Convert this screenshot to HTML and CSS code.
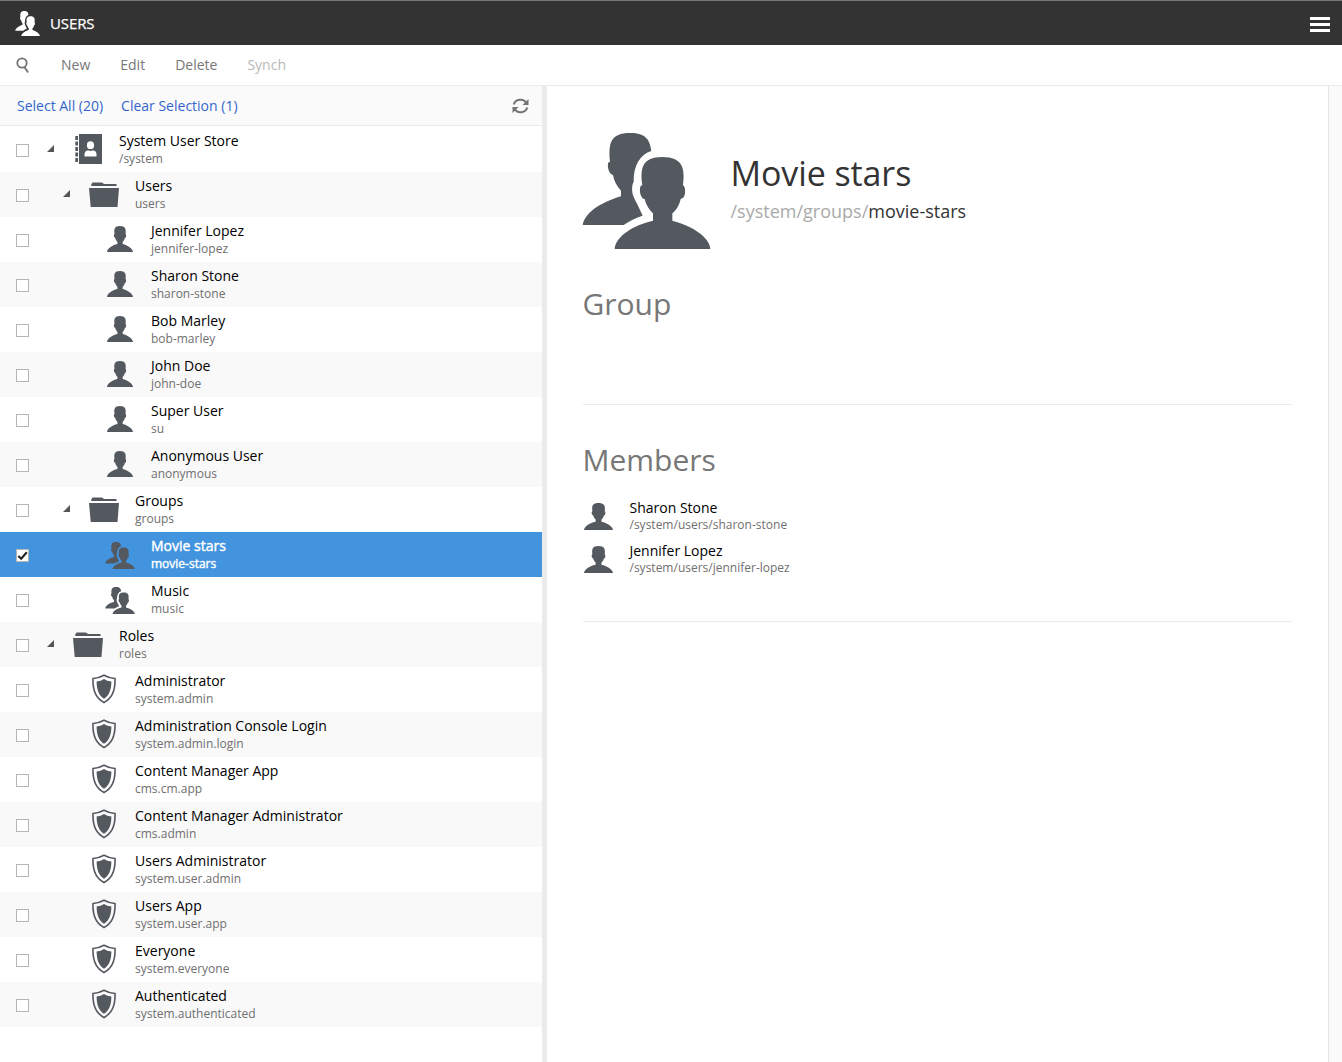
FILE: index.html
```html
<!DOCTYPE html>
<html lang="en">
<head>
<meta charset="utf-8">
<title>Users</title>
<link rel="stylesheet" href="styles.css">
</head>
<body>
<svg class="sprite" aria-hidden="true">
  <symbol id="user" viewBox="134 111 287 276" preserveAspectRatio="none">
    <path d="M134 387C136 350 190 315 249 302V280C240 272 228 255 224 237C213 236 207 215 211 200Q213 196 217 196C210 145 216 111 277 111C338 111 346 145 339 196C346 197 347 220 343 228Q339 237 332 237C328 255 318 272 307 280V302C360 315 420 350 421 387Z"/>
  </symbol>
  <symbol id="group" viewBox="36 39 387 348" preserveAspectRatio="none">
    <path d="M134 387C136 350 190 315 249 302V280C240 272 228 255 224 237C213 236 207 215 211 200Q213 196 217 196C210 145 216 111 277 111C338 111 346 145 339 196C346 197 347 220 343 228Q339 237 332 237C328 255 318 272 307 280V302C360 315 420 350 421 387Z"/>
    <path d="M38 315C45 280 85 250 153 229V212C140 198 132 183 129 165C118 163 112 145 114 130Q116 125 120 125C115 70 120 39 181 39C228 39 240 60 244 93C212 102 190 135 191 185C185 195 185 215 190 228Q194 239 202 253L218 287C197 293 178 303 161 315Z"/>
  </symbol>
  <symbol id="folder" viewBox="0 0 30 25" preserveAspectRatio="none">
    <path d="M2.3 4V1.8H3L3.4.5H13L15 2H27.5V4ZM0 6H30L28.5 25H1.7Z"/>
  </symbol>
  <symbol id="store" viewBox="0 0 27 30">
    <path fill-rule="evenodd" d="M4 0H27V30H4ZM15.5 7.3A3.6 3.9 0 0 0 15.5 15.1A3.6 3.9 0 0 0 15.5 7.3ZM9.5 22.5H21.5V19.5Q21 16.8 18 16.2Q15.500 17.600 13 16.200Q10 16.800 9.500 19.500Z"/>
    <path d="M.3 2H3V6H.3ZM.3 7.500H3V11.500H.3ZM.3 13H3V17H.3ZM.3 18.500H3V22.500H.3ZM.3 24H3V28H.3Z"/>
  </symbol>
  <symbol id="shield" viewBox="0 0 24 30">
    <path fill="none" stroke="currentColor" stroke-width="1.600" d="M12 1.200Q7 4 1 4.500C.5 17 4 24.500 12 28.500C20 24.500 23.500 17 23 4.500Q17 4 12 1.200Z"/>
    <path d="M12 5Q9 7 4.600 7.500C4.700 16.500 7 21.500 12 24.700C17 21.500 19.300 16.500 19.400 7.500Q15 7 12 5Z"/>
  </symbol>
  <symbol id="arrow" viewBox="0 0 7 7"><path d="M7 0V7H0Z"/></symbol>
  <symbol id="check" viewBox="0 0 13 13"><path fill="none" stroke="#222" stroke-width="2.100" d="M2.300 7L5.200 9.700L10.800 3.300"/></symbol>
</svg>

<header class="appbar">
  <svg class="appbar-icon"><use href="#group"/></svg>
  <span class="appbar-title">USERS</span>
  <span class="burger"><i></i><i></i><i></i></span>
</header>

<nav class="toolbar">
  <svg class="search" viewBox="0 0 14 17"><circle cx="6" cy="6" r="4.700"/><path d="M8.500 10L12 15.500"/></svg>
  <span class="action">New</span>
  <span class="action">Edit</span>
  <span class="action">Delete</span>
  <span class="action disabled">Synch</span>
</nav>

<main class="panels">
  <section class="tree">
    <div class="tree-bar">
      <a class="select-all">Select All (20)</a>
      <a>Clear Selection (1)</a>
      <svg class="refresh" viewBox="0 0 17 16"><path class="arc" d="M1.700 6.500C3.500.8 11 .2 14 4.500M15.300 9.500C13.500 15.200 6 15.800 3 11.500"/><path d="M16.500 1V7H10.500ZM.5 15V9H6.500Z"/></svg>
    </div>
    <div class="row"><i class="box"></i><svg class="arrow"><use href="#arrow"/></svg><svg class="icon store"><use href="#store"/></svg><div class="label"><b>System User Store</b><span>/system</span></div></div>
    <div class="row l1"><i class="box"></i><svg class="arrow"><use href="#arrow"/></svg><svg class="icon folder"><use href="#folder"/></svg><div class="label"><b>Users</b><span>users</span></div></div>
    <div class="row l2"><i class="box"></i><i class="arrow"></i><svg class="icon user"><use href="#user"/></svg><div class="label"><b>Jennifer Lopez</b><span>jennifer-lopez</span></div></div>
    <div class="row l2"><i class="box"></i><i class="arrow"></i><svg class="icon user"><use href="#user"/></svg><div class="label"><b>Sharon Stone</b><span>sharon-stone</span></div></div>
    <div class="row l2"><i class="box"></i><i class="arrow"></i><svg class="icon user"><use href="#user"/></svg><div class="label"><b>Bob Marley</b><span>bob-marley</span></div></div>
    <div class="row l2"><i class="box"></i><i class="arrow"></i><svg class="icon user"><use href="#user"/></svg><div class="label"><b>John Doe</b><span>john-doe</span></div></div>
    <div class="row l2"><i class="box"></i><i class="arrow"></i><svg class="icon user"><use href="#user"/></svg><div class="label"><b>Super User</b><span>su</span></div></div>
    <div class="row l2"><i class="box"></i><i class="arrow"></i><svg class="icon user"><use href="#user"/></svg><div class="label"><b>Anonymous User</b><span>anonymous</span></div></div>
    <div class="row l1"><i class="box"></i><svg class="arrow"><use href="#arrow"/></svg><svg class="icon folder"><use href="#folder"/></svg><div class="label"><b>Groups</b><span>groups</span></div></div>
    <div class="row l2 selected"><i class="box"><svg><use href="#check"/></svg></i><i class="arrow"></i><svg class="icon group"><use href="#group"/></svg><div class="label"><b>Movie stars</b><span>movie-stars</span></div></div>
    <div class="row l2"><i class="box"></i><i class="arrow"></i><svg class="icon group"><use href="#group"/></svg><div class="label"><b>Music</b><span>music</span></div></div>
    <div class="row"><i class="box"></i><svg class="arrow"><use href="#arrow"/></svg><svg class="icon folder"><use href="#folder"/></svg><div class="label"><b>Roles</b><span>roles</span></div></div>
    <div class="row l1"><i class="box"></i><i class="arrow"></i><svg class="icon shield"><use href="#shield"/></svg><div class="label"><b>Administrator</b><span>system.admin</span></div></div>
    <div class="row l1"><i class="box"></i><i class="arrow"></i><svg class="icon shield"><use href="#shield"/></svg><div class="label"><b>Administration Console Login</b><span>system.admin.login</span></div></div>
    <div class="row l1"><i class="box"></i><i class="arrow"></i><svg class="icon shield"><use href="#shield"/></svg><div class="label"><b>Content Manager App</b><span>cms.cm.app</span></div></div>
    <div class="row l1"><i class="box"></i><i class="arrow"></i><svg class="icon shield"><use href="#shield"/></svg><div class="label"><b>Content Manager Administrator</b><span>cms.admin</span></div></div>
    <div class="row l1"><i class="box"></i><i class="arrow"></i><svg class="icon shield"><use href="#shield"/></svg><div class="label"><b>Users Administrator</b><span>system.user.admin</span></div></div>
    <div class="row l1"><i class="box"></i><i class="arrow"></i><svg class="icon shield"><use href="#shield"/></svg><div class="label"><b>Users App</b><span>system.user.app</span></div></div>
    <div class="row l1"><i class="box"></i><i class="arrow"></i><svg class="icon shield"><use href="#shield"/></svg><div class="label"><b>Everyone</b><span>system.everyone</span></div></div>
    <div class="row l1"><i class="box"></i><i class="arrow"></i><svg class="icon shield"><use href="#shield"/></svg><div class="label"><b>Authenticated</b><span>system.authenticated</span></div></div>
  </section>
  <div class="splitter"></div>
  <section class="detail">
    <div class="hero">
      <svg class="hero-icon"><use href="#group"/></svg>
      <div class="hero-text">
        <h1>Movie stars</h1>
        <p class="path">/system/groups/<span>movie-stars</span></p>
      </div>
    </div>
    <div class="block group-block"><h2>Group</h2></div>
    <div class="block members-block">
      <h2>Members</h2>
      <div class="member"><svg><use href="#user"/></svg><div class="label"><b>Sharon Stone</b><span>/system/users/sharon-stone</span></div></div>
      <div class="member"><svg><use href="#user"/></svg><div class="label"><b>Jennifer Lopez</b><span>/system/users/jennifer-lopez</span></div></div>
    </div>
  </section>
  <aside class="gutter"></aside>
</main>
</body>
</html>
```

FILE: styles.css
```css
* { box-sizing: border-box; }
body {
  margin: 0;
  height: 1062px;
  display: flex;
  flex-direction: column;
  overflow: hidden;
  font: 14px/18px "Open Sans", sans-serif;
  color: #000;
  background: #fff;
}
svg { display: block; flex: none; fill: currentColor; }
.sprite { position: absolute; width: 0; height: 0; }

.appbar {
  flex: none;
  height: 45px;
  padding: 0 12px 0 15px;
  display: flex;
  align-items: center;
  background: #333;
  border-top: 1px solid #777;
  color: #fff;
}
.appbar-icon { width: 25px; height: 25px; }
.appbar-title { margin-left: 10px; font-size: 15px; letter-spacing: -.1px; -webkit-text-stroke: .25px #fff; }
.burger { margin-left: auto; margin-top: 3px; display: grid; gap: 3px; }
.burger i { width: 20px; height: 3px; background: #fff; }

.toolbar {
  flex: none;
  height: 41px;
  padding-left: 16px;
  display: flex;
  align-items: center;
  border-bottom: 1px solid #ebebeb;
  color: #777;
}
.search { width: 14px; height: 17px; margin-right: 31px; fill: none; stroke: #737373; stroke-width: 1.8; }
.action { margin-right: 30px; }
.disabled { color: #b8b8b8; }

.panels { flex: 1; display: flex; min-height: 0; }
.tree { width: 542px; flex: none; }
.tree-bar {
  height: 40px;
  margin-bottom: 1px;
  padding: 0 13px 0 17px;
  display: flex;
  align-items: center;
  background: #fafafa;
  border-bottom: 1px solid #ebebeb;
  color: #3366cc;
}
.select-all { margin-right: 18px; }
.refresh { width: 17px; height: 16px; margin-left: auto; color: #737373; }
.refresh .arc { fill: none; stroke: currentColor; stroke-width: 2; }

.row { height: 45px; padding-left: 16px; display: flex; align-items: flex-start; }
.row:nth-child(odd) { background: #f9f9f9; }
.box { flex: none; width: 13px; height: 13px; margin: 17px 17.5px 0 0; border: 1px solid #b5b5b5; background: #fff; }
.box svg { width: 13px; height: 13px; margin: -1px; }
.arrow { width: 7px; height: 7px; margin: 18px .5px 0 0; color: #555; flex: none; }
.l1 .arrow { margin-left: 16px; }
.l2 .arrow { margin-left: 32px; }
.icon { color: #545960; }
.store { width: 27px; height: 30px; margin: 7px 17px 0 21px; }
.folder { width: 30px; height: 25px; margin: 10px 16px 0 19px; }
.user { width: 26px; height: 26px; margin: 9px 18px 0 21px; }
.group { width: 30px; height: 27px; margin: 10px 16px 0 19px; }
.shield { width: 24px; height: 30px; margin: 7px 19px 0 22px; }
.label { display: flex; flex-direction: column; }
.label b { font-weight: 400; line-height: 19px; }
.label span { font-size: 12px; line-height: 16px; color: #6f6f6f; }
.row .label { padding-top: 4px; gap: 1px; }
.row.selected { background: #4294de; }
.selected .label b, .selected .label span { color: #fff; -webkit-text-stroke: .4px #fff; }

.splitter { width: 5px; flex: none; background: #ebebeb; }
.detail { flex: 1; padding: 47px 36px 0; }
.hero { display: flex; height: 116px; margin-left: -1px; }
.hero-icon { width: 129px; height: 116px; color: #545960; }
.hero-text { margin-left: 19.5px; padding-top: 16px; }
h1 { margin: 0; font-size: 34px; line-height: 48px; font-weight: 400; color: #333; letter-spacing: -.1px; }
.path { margin: 2px 0 0; font-size: 18px; line-height: 24px; color: #aaa; }
.path span { color: #333; }
h2 { margin: 0 0 0 -.5px; font-size: 30px; line-height: 40px; font-weight: 400; color: #777; }
.block { border-bottom: 1px solid #ebebeb; }
.group-block { height: 156px; padding-top: 35px; }
.members-block { height: 217px; padding-top: 35px; }
.members-block h2 { margin-bottom: 18px; }
.member { display: flex; height: 43px; padding-left: 1px; }
.member svg { width: 29px; height: 27px; margin-top: 5px; color: #545960; }
.member .label { margin-left: 16.5px; }
.gutter { width: 14px; flex: none; background: #fafafa; border-left: 1px solid #e3e3e3; }
```
